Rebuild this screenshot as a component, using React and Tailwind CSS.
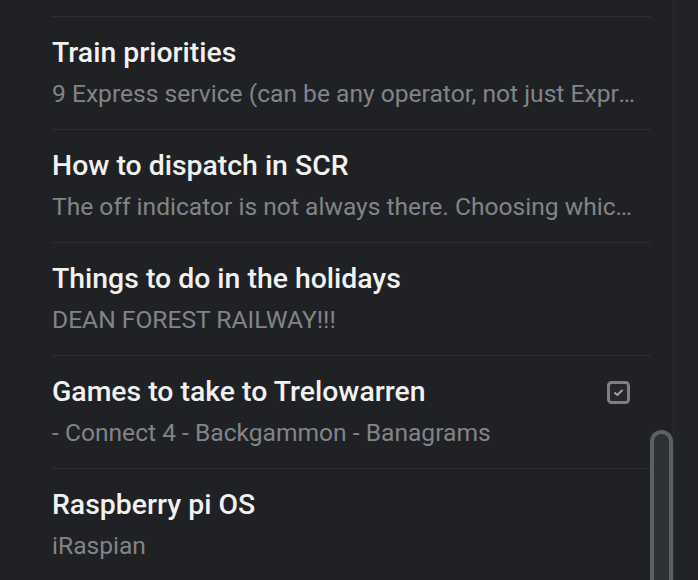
import React from "react";

const items = [
  { title: "Train priorities", sub: "9 Express service (can be any operator, not just Express Shuttle) 8 Airport" },
  { title: "How to dispatch in SCR", sub: "The off indicator is not always there. Choosing which route to take" },
  { title: "Things to do in the holidays", sub: "DEAN FOREST RAILWAY!!!" },
  { title: "Games to take to Trelowarren", sub: "- Connect 4 - Backgammon - Banagrams", check: true },
  { title: "Raspberry pi OS", sub: "iRaspian" },
];

function CheckIcon() {
  return (
    <svg width="23" height="23" viewBox="0 0 23 23" className="shrink-0">
      <rect x="1.5" y="1.5" width="20" height="20" rx="3" fill="#25272b" stroke="#7d7f83" strokeWidth="3" />
      <path d="M8 12 L10.3 14 L15 9.5" fill="none" stroke="#a2a4a7" strokeWidth="2" strokeLinecap="round" strokeLinejoin="round" />
    </svg>
  );
}

export default function App() {
  return (
    <div
      className="flex h-[580px] w-[698px] overflow-hidden bg-[#1f2125]"
      style={{ fontFamily: "Roboto, 'Noto Sans', sans-serif" }}
    >
      <div className="flex w-[673px] shrink-0">
        <div className="ml-[52px] flex w-[599px] shrink-0 flex-col pt-[16px]">
          {items.map((it, i) => (
            <div key={i} className="h-[113px] shrink-0 border-t border-[#2c2e32] pt-[19px]">
              <div className="flex items-center justify-between pr-[21px]">
                <div className="text-[28.4px] font-medium leading-[34px] text-[#f1f1f1]">{it.title}</div>
                {it.check && <CheckIcon />}
              </div>
              <div className="mt-[9px] w-[592px] truncate text-[24.6px] leading-[30px] text-[#828488]">{it.sub}</div>
            </div>
          ))}
        </div>
        <div className="flex w-[22px] shrink-0 flex-col">
          <div className="mt-[430px] h-[200px] w-[23px] shrink-0 -translate-x-[1px] rounded-t-full border-[4px] border-b-0 border-[#5c5f64] bg-[#2d3034]" />
        </div>
      </div>
      <div className="h-full w-px bg-[#2a2c30]" />
      <div className="h-full flex-1 bg-[#212327]" />
    </div>
  );
}
